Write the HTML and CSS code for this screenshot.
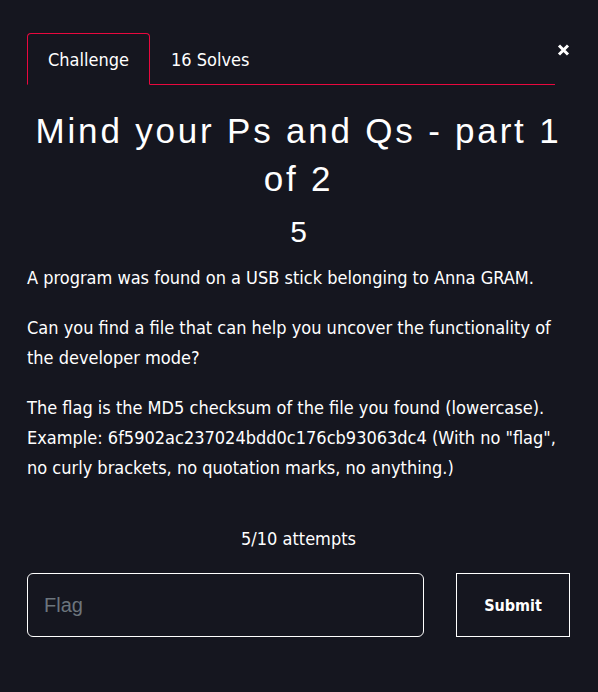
FILE: index.html
```html
<!DOCTYPE html>
<html>
<head>
<meta charset="utf-8">
<link rel="stylesheet" href="styles.css">
</head>
<body>
<div class="modal">
  <div class="modal-header">
    <ul class="tabs">
      <li class="tab active">Challenge</li>
      <li class="tab">16 Solves</li>
    </ul>
    <button class="close" aria-label="Close">
      <svg width="13" height="12" viewBox="0 0 13 12"><path d="M2 1.5 L11 10.5 M11 1.5 L2 10.5" stroke="#fff" stroke-width="3" stroke-linecap="butt"/></svg>
    </button>
  </div>
  <h2 class="title">Mind your Ps and Qs - part 1 of 2</h2>
  <h3 class="points">5</h3>
  <div class="description">
    <p>A program was found on a USB stick belonging to Anna GRAM.</p>
    <p>Can you find a file that can help you uncover the functionality of the developer mode?</p>
    <p>The flag is the MD5 checksum of the file you found (lowercase). Example: 6f5902ac237024bdd0c176cb93063dc4 (With no "flag", no curly brackets, no quotation marks, no anything.)</p>
  </div>
  <p class="attempts">5/10 attempts</p>
  <form class="submit-row">
    <input class="flag-input" type="text" placeholder="Flag">
    <button class="submit" type="button">Submit</button>
  </form>
</div>
</body>
</html>
```
FILE: styles.css
```css
html, body {
  margin: 0;
  padding: 0;
  background: #15161f;
  color: #ffffff;
}
body {
  font-family: "Liberation Sans Narrow", "DejaVu Sans Condensed", "Liberation Sans", sans-serif;
}
.modal {
  padding: 33px 28px 40px 27px;
}
.modal-header {
  display: flex;
  align-items: flex-start;
}
.tabs {
  flex: 1;
  display: flex;
  list-style: none;
  margin: 0 1px 0 0;
  padding: 0;
  border-bottom: 1px solid #e8083e;
}
.tab {
  font-size: 18px;
  line-height: 24px;
  padding: 14px 20px 12px 20px;
  margin-bottom: -1px;
  border: 1px solid transparent;
  border-radius: 4px 4px 0 0;
}
.tab.active {
  border-color: #e8083e;
  border-bottom-color: #15161f;
}
.close {
  background: none;
  border: 0;
  padding: 0;
  margin-top: 10px;
  width: 14px;
  height: 14px;
  display: flex;
  align-items: center;
  justify-content: center;
}
.title {
  font-family: "Liberation Sans", sans-serif;
  font-weight: normal;
  font-size: 35px;
  line-height: 48px;
  letter-spacing: 2.8px;
  text-align: center;
  margin: 22px 0 0 0;
}
.points {
  font-family: "Liberation Sans", sans-serif;
  font-weight: normal;
  font-size: 30px;
  line-height: 40px;
  text-align: center;
  margin: 9px 0 11px 0;
}
.description p {
  font-size: 18px;
  line-height: 30px;
  margin: 0 0 20px 0;
}
.attempts {
  text-align: center;
  font-size: 18px;
  line-height: 30px;
  margin: 41px 0 19px 0;
}
.submit-row {
  display: flex;
  gap: 32px;
}
.flag-input {
  flex: 1;
  height: 64px;
  box-sizing: border-box;
  background: transparent;
  border: 1px solid #ffffff;
  border-radius: 6px;
  padding: 0 16px;
  color: #fff;
  font-family: "Liberation Sans", sans-serif;
  font-size: 20px;
}
.flag-input::placeholder {
  color: #6c757d;
}
.submit {
  width: 114px;
  height: 64px;
  background: transparent;
  border: 1px solid #ffffff;
  color: #fff;
  font-family: "DejaVu Sans Condensed", "Liberation Sans", sans-serif;
  font-weight: bold;
  font-size: 16px;
}
```
